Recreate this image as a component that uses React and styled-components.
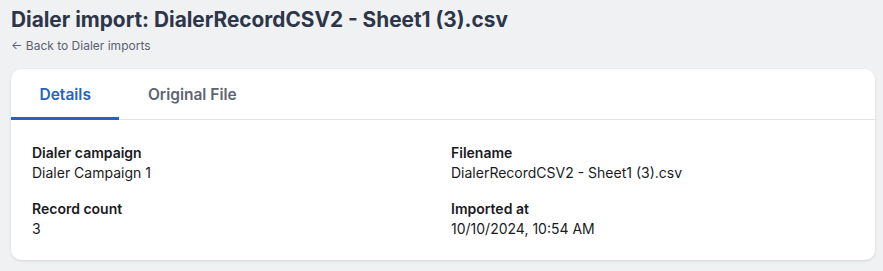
import React, { useState } from "react";
import styled, { createGlobalStyle } from "styled-components";

const GlobalStyle = createGlobalStyle`
    html, body {
        margin: 0;
        padding: 0;
        background: #f0f1f3;
        font-family: Inter, "Noto Sans", sans-serif;
    }
`;

const Page = styled.div`
    padding: 4px 8px 12px 11px;
`;

const Title = styled.h1`
    margin: 0;
    font-size: 20.8px;
    line-height: 32px;
    font-weight: 700;
    color: #2d3648;
`;

const BackLink = styled.a`
    display: block;
    margin-top: 2px;
    font-size: 12px;
    line-height: 16px;
    color: #5b6170;
    text-decoration: none;
`;

const Card = styled.section`
    margin-top: 15px;
    background: #ffffff;
    border-radius: 10px;
    box-shadow: 0 1px 3px rgba(0, 0, 0, 0.12);
    overflow: hidden;
`;

const TabBar = styled.div`
    display: flex;
    border-bottom: 1px solid #e2e3e6;
`;

const Tab = styled.button`
    border: none;
    background: none;
    padding: 3px 28.5px 0;
    height: 51px;
    font-family: inherit;
    font-size: 15.5px;
    font-weight: 600;
    color: ${(props) => (props.$active ? "#2563c0" : "#5e6473")};
    border-bottom: 3px solid ${(props) => (props.$active ? "#2563c0" : "transparent")};
    margin-bottom: -1px;
    cursor: pointer;
`;

const Grid = styled.div`
    display: grid;
    grid-template-columns: 1fr 1fr;
    column-gap: 16px;
    row-gap: 16px;
    padding: 23px 21px 21px;
`;

const Label = styled.div`
    font-size: 14px;
    line-height: 20px;
    font-weight: 600;
    color: #1a1b1f;
`;

const Value = styled.div`
    font-size: 14px;
    line-height: 20px;
    color: #1a1b1f;
`;

function Field({ label, value }) {
    return (
        <div>
            <Label>{label}</Label>
            <Value>{value}</Value>
        </div>
    );
}

export default function App() {
    const [tab, setTab] = useState("details");

    return (
        <>
            <GlobalStyle />
            <Page>
                <Title>Dialer import: DialerRecordCSV2 - Sheet1 (3).csv</Title>
                <BackLink href="#">← Back to Dialer imports</BackLink>
                <Card>
                    <TabBar>
                        <Tab $active={tab === "details"} onClick={() => setTab("details")}>Details</Tab>
                        <Tab $active={tab === "file"} onClick={() => setTab("file")}>Original File</Tab>
                    </TabBar>
                    <Grid>
                        <Field label="Dialer campaign" value="Dialer Campaign 1" />
                        <Field label="Filename" value="DialerRecordCSV2 - Sheet1 (3).csv" />
                        <Field label="Record count" value="3" />
                        <Field label="Imported at" value="10/10/2024, 10:54 AM" />
                    </Grid>
                </Card>
            </Page>
        </>
    );
}
